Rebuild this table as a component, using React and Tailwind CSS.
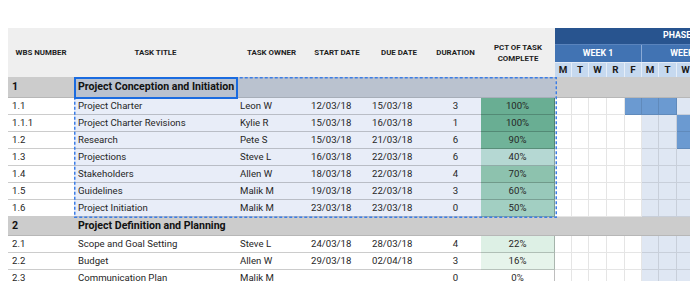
import React from 'react'

const days = [
  { d: 'M', w: 'w-[17px]' },
  { d: 'T', w: 'w-[17px]' },
  { d: 'W', w: 'w-[18px]' },
  { d: 'R', w: 'w-[18px]' },
  { d: 'F', w: 'w-[17px]' },
  { d: 'M', w: 'w-[17px]' },
  { d: 'T', w: 'w-[18px]' },
  { d: 'W', w: 'w-[18px]' },
  { d: 'R', w: 'w-[17px]' },
  { d: 'F', w: 'w-[17px]' },
]

const rows = [
  { phase: true, wbs: '1', title: 'Project Conception and Initiation', sel: true, h: 'h-[21px]' },
  { wbs: '1.1', title: 'Project Charter', owner: 'Leon W', start: '12/03/18', due: '15/03/18', dur: 3, pct: '100%', pctBg: 'bg-[#69ae93]', bars: [4, 5, 6], sel: true },
  { wbs: '1.1.1', title: 'Project Charter Revisions', owner: 'Kylie R', start: '15/03/18', due: '16/03/18', dur: 1, pct: '100%', pctBg: 'bg-[#69ae93]', bars: [7], sel: true },
  { wbs: '1.2', title: 'Research', owner: 'Pete S', start: '15/03/18', due: '21/03/18', dur: 6, pct: '90%', pctBg: 'bg-[#70b399]', bars: [7], sel: true },
  { wbs: '1.3', title: 'Projections', owner: 'Steve L', start: '16/03/18', due: '22/03/18', dur: 6, pct: '40%', pctBg: 'bg-[#b5d8d3]', bars: [], sel: true },
  { wbs: '1.4', title: 'Stakeholders', owner: 'Allen W', start: '18/03/18', due: '22/03/18', dur: 4, pct: '70%', pctBg: 'bg-[#8dc2ae]', bars: [], sel: true },
  { wbs: '1.5', title: 'Guidelines', owner: 'Malik M', start: '19/03/18', due: '22/03/18', dur: 3, pct: '60%', pctBg: 'bg-[#98c9ba]', bars: [], sel: true },
  { wbs: '1.6', title: 'Project Initiation', owner: 'Malik M', start: '23/03/18', due: '23/03/18', dur: 0, pct: '50%', pctBg: 'bg-[#a2cfc2]', bars: [], sel: true },
  { phase: true, wbs: '2', title: 'Project Definition and Planning', h: 'h-[19px]' },
  { wbs: '2.1', title: 'Scope and Goal Setting', owner: 'Steve L', start: '24/03/18', due: '28/03/18', dur: 4, pct: '22%', pctBg: 'bg-[#ddf0e5]', bars: [] },
  { wbs: '2.2', title: 'Budget', owner: 'Allen W', start: '29/03/18', due: '02/04/18', dur: 3, pct: '16%', pctBg: 'bg-[#e6f4eb]', bars: [] },
  { wbs: '2.3', title: 'Communication Plan', owner: 'Malik M', start: '', due: '', dur: 0, pct: '0%', pctBg: 'bg-white', bars: [] },
]

function GanttCells({ row }) {
  if (row.phase) return <div className="w-[174px] bg-[#cccccc] border-b border-black/10" />
  return (
    <div className="flex">
      {days.map((d, i) => {
        let bg = i >= 5 ? 'bg-[#dfe7f3]' : 'bg-white'
        if (row.bars.includes(i)) bg = 'bg-[#6b9ad1]'
        return <div key={i} className={`${d.w} h-full border-r border-b border-black/10 ${bg}`} />
      })}
    </div>
  )
}

function Row({ row }) {
  if (row.phase) {
    const tint = row.sel ? 'bg-[#bac2cf]' : 'bg-[#cccccc]'
    return (
      <div className={`flex ${row.h} font-bold text-[10.6px] text-[#111]`}>
        <div className="w-[66px] pl-[4px] flex items-center bg-[#cccccc] border-b border-black/10">{row.wbs}</div>
        <div className={`w-[481px] pl-[4px] flex items-center ${tint} border-b border-black/10`}>{row.title}</div>
        <GanttCells row={row} />
      </div>
    )
  }
  const bg = row.sel ? 'bg-[#e8edf8]' : 'bg-white'
  const line = 'border-b border-black/20'
  return (
    <div className="flex h-[17px] text-[9.6px] text-[#262626]">
      <div className={`w-[66px] pl-[4px] flex items-center bg-white ${line}`}>{row.wbs}</div>
      <div className={`w-[163px] pl-[4px] flex items-center ${bg} ${line}`}>{row.title}</div>
      <div className={`w-[69px] pl-[3px] flex items-center ${bg} ${line}`}>{row.owner}</div>
      <div className={`w-[62px] pl-[5px] flex items-center ${bg} ${line}`}>{row.start}</div>
      <div className={`w-[62px] pl-[4px] flex items-center ${bg} ${line}`}>{row.due}</div>
      <div className={`w-[51px] flex items-center justify-center ${bg} ${line}`}>{row.dur}</div>
      <div className={`w-[74px] flex items-center justify-center ${row.pctBg} ${line} border-r border-r-black/25`}>{row.pct}</div>
      <GanttCells row={row} />
    </div>
  )
}

export default function App() {
  return (
    <div className="w-[690px] h-[281px] overflow-hidden bg-white font-['Roboto',sans-serif]">
      <div className="pt-[28px] pl-[8px]">
        <div className="relative w-max">
          <div className="flex h-[49px]">
            <div className="flex bg-[#efefef] text-[7.9px] font-bold text-[#1e1e1e] uppercase">
              <div className="w-[66px] flex items-center justify-center">WBS Number</div>
              <div className="w-[163px] flex items-center justify-center">Task Title</div>
              <div className="w-[69px] flex items-center justify-center">Task Owner</div>
              <div className="w-[62px] flex items-center justify-center">Start Date</div>
              <div className="w-[62px] flex items-center justify-center">Due Date</div>
              <div className="w-[51px] flex items-center justify-center">Duration</div>
              <div className="w-[74px] flex items-center justify-center text-center leading-[11px]">Pct of Task<br />Complete</div>
            </div>
            <div className="flex flex-col w-[174px] text-[8.8px] font-bold">
              <div className="h-[17px] bg-[#28548f] text-white flex items-center pl-[108px] border-b border-[#5a84bd]">PHASE 1</div>
              <div className="h-[17px] flex text-white">
                <div className="w-[87px] bg-[#4173b3] flex items-center justify-center border-r border-[#8aaad6]">WEEK 1</div>
                <div className="w-[87px] bg-[#4173b3] flex items-center justify-center">WEEK 2</div>
              </div>
              <div className="h-[15px] flex text-[#1a1a1a] text-[9.8px] border-t border-[#e4ecf7]">
                {days.map((d, i) => (
                  <div key={i} className={`${d.w} bg-[#c6d9ef] flex items-center justify-center border-r border-[#e6eef8]`}>{d.d}</div>
                ))}
              </div>
            </div>
          </div>
          {rows.map((r, i) => <Row key={i} row={r} />)}
          <svg className="absolute left-[66px] top-[49px]" width="483" height="141">
            <rect x="0.75" y="0.75" width="481.5" height="139.5" fill="none" stroke="#3b7de6" strokeWidth="1.5" strokeDasharray="3 2" />
          </svg>
          <div className="absolute left-[66px] top-[49px] w-[164px] h-[22px] border-2 border-[#1a6be0]" />
        </div>
      </div>
    </div>
  )
}
